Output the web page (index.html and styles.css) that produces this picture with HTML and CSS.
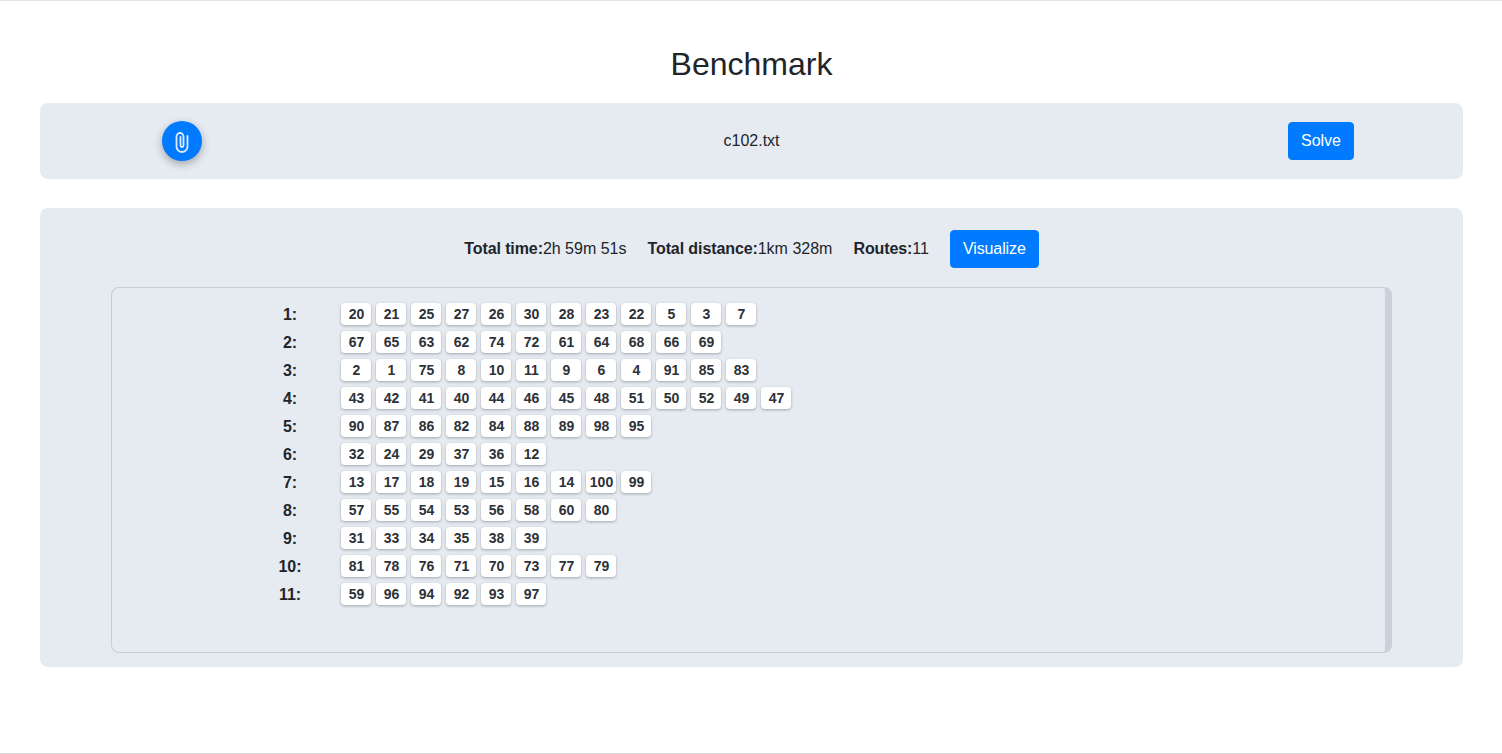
FILE: index.html
```html
<!DOCTYPE html>
<html lang="en">
<head>
    <meta charset="UTF-8">
    <meta name="viewport" content="width=device-width, initial-scale=1.0">
    <title>Benchmark</title>
    <link rel="stylesheet" href="styles.css">
</head>
<body>
    <div class="page">
        <h1 class="title">Benchmark</h1>

        <section class="panel upload">
            <div class="upload-cell">
                <button class="attach" type="button" aria-label="Attach file">
                    <svg viewBox="0 0 24 24" width="24" height="24" fill="none" stroke="#dcecff" stroke-width="1.8" stroke-linecap="round" stroke-linejoin="round">
                        <path d="M17.5 6v10.5a5.5 5.5 0 0 1-11 0V6.5a3.5 3.5 0 0 1 7 0v9a1.5 1.5 0 0 1-3 0V7"/>
                    </svg>
                </button>
            </div>
            <div class="file-name">c102.txt</div>
            <div class="upload-cell">
                <button class="btn" type="button">Solve</button>
            </div>
        </section>

        <section class="panel results">
            <div class="summary">
                <span><b>Total time:</b>2h 59m 51s</span>
                <span><b>Total distance:</b>1km 328m</span>
                <span><b>Routes:</b>11</span>
                <button class="btn" type="button">Visualize</button>
            </div>

            <div class="routes">
                <div class="route"><div class="route-name">1:</div><div class="stops"><span class="stop">20</span><span class="stop">21</span><span class="stop">25</span><span class="stop">27</span><span class="stop">26</span><span class="stop">30</span><span class="stop">28</span><span class="stop">23</span><span class="stop">22</span><span class="stop">5</span><span class="stop">3</span><span class="stop">7</span></div></div>
                <div class="route"><div class="route-name">2:</div><div class="stops"><span class="stop">67</span><span class="stop">65</span><span class="stop">63</span><span class="stop">62</span><span class="stop">74</span><span class="stop">72</span><span class="stop">61</span><span class="stop">64</span><span class="stop">68</span><span class="stop">66</span><span class="stop">69</span></div></div>
                <div class="route"><div class="route-name">3:</div><div class="stops"><span class="stop">2</span><span class="stop">1</span><span class="stop">75</span><span class="stop">8</span><span class="stop">10</span><span class="stop">11</span><span class="stop">9</span><span class="stop">6</span><span class="stop">4</span><span class="stop">91</span><span class="stop">85</span><span class="stop">83</span></div></div>
                <div class="route"><div class="route-name">4:</div><div class="stops"><span class="stop">43</span><span class="stop">42</span><span class="stop">41</span><span class="stop">40</span><span class="stop">44</span><span class="stop">46</span><span class="stop">45</span><span class="stop">48</span><span class="stop">51</span><span class="stop">50</span><span class="stop">52</span><span class="stop">49</span><span class="stop">47</span></div></div>
                <div class="route"><div class="route-name">5:</div><div class="stops"><span class="stop">90</span><span class="stop">87</span><span class="stop">86</span><span class="stop">82</span><span class="stop">84</span><span class="stop">88</span><span class="stop">89</span><span class="stop">98</span><span class="stop">95</span></div></div>
                <div class="route"><div class="route-name">6:</div><div class="stops"><span class="stop">32</span><span class="stop">24</span><span class="stop">29</span><span class="stop">37</span><span class="stop">36</span><span class="stop">12</span></div></div>
                <div class="route"><div class="route-name">7:</div><div class="stops"><span class="stop">13</span><span class="stop">17</span><span class="stop">18</span><span class="stop">19</span><span class="stop">15</span><span class="stop">16</span><span class="stop">14</span><span class="stop">100</span><span class="stop">99</span></div></div>
                <div class="route"><div class="route-name">8:</div><div class="stops"><span class="stop">57</span><span class="stop">55</span><span class="stop">54</span><span class="stop">53</span><span class="stop">56</span><span class="stop">58</span><span class="stop">60</span><span class="stop">80</span></div></div>
                <div class="route"><div class="route-name">9:</div><div class="stops"><span class="stop">31</span><span class="stop">33</span><span class="stop">34</span><span class="stop">35</span><span class="stop">38</span><span class="stop">39</span></div></div>
                <div class="route"><div class="route-name">10:</div><div class="stops"><span class="stop">81</span><span class="stop">78</span><span class="stop">76</span><span class="stop">71</span><span class="stop">70</span><span class="stop">73</span><span class="stop">77</span><span class="stop">79</span></div></div>
                <div class="route"><div class="route-name">11:</div><div class="stops"><span class="stop">59</span><span class="stop">96</span><span class="stop">94</span><span class="stop">92</span><span class="stop">93</span><span class="stop">97</span></div></div>
            </div>
        </section>
    </div>
</body>
</html>
```

FILE: styles.css
```css
* {
    box-sizing: border-box;
}

html, body {
    height: 100%;
}

body {
    margin: 0;
    font-family: "Liberation Sans", Arial, sans-serif;
    font-size: 16px;
    line-height: 1.5;
    color: #212529;
    background-color: #ffffff;
}

.page {
    height: 754px;
    padding: 0 39px 0 40px;
    border-top: 1px solid #e1e5ec;
    border-bottom: 1px solid #d9d9d9;
    overflow: hidden;
}

.title {
    margin: 0;
    padding-top: 40px;
    height: 102px;
    font-size: 32px;
    font-weight: 400;
    line-height: 46px;
    text-align: center;
}

.panel {
    background-color: #e6ebf2;
    border-radius: 8px;
}

.upload {
    display: grid;
    grid-template-columns: 284px 1fr 284px;
    align-items: center;
    height: 76px;
    margin-bottom: 29px;
}

.upload-cell {
    display: flex;
    justify-content: center;
}

.file-name {
    text-align: center;
}

.attach {
    display: flex;
    align-items: center;
    justify-content: center;
    width: 40px;
    height: 40px;
    padding: 2px 0 0;
    border: none;
    border-radius: 50%;
    background-color: #007bff;
    box-shadow: 0 3px 8px rgba(0, 0, 0, 0.3);
    cursor: pointer;
}

.btn {
    height: 38px;
    padding: 0 12px;
    border: 1px solid #007bff;
    border-radius: 4px;
    background-color: #007bff;
    color: #ffffff;
    font-family: inherit;
    font-size: 16px;
    cursor: pointer;
}

.results {
    height: 459px;
    padding: 22px 71px 14px 71px;
}

.summary {
    display: flex;
    justify-content: center;
    align-items: center;
    gap: 21px;
    margin-bottom: 19px;
}

.summary b {
    letter-spacing: -0.1px;
}

.summary .btn {
    letter-spacing: -0.1px;
}

.routes {
    height: 366px;
    padding: 12px 0 0 149px;
    border: 1px solid #c8ccd4;
    border-right: 7px solid #ccd1d9;
    border-radius: 8px;
    overflow: hidden;
}

.route {
    display: flex;
    align-items: center;
    height: 28px;
}

.route-name {
    width: 58px;
    margin-right: 22px;
    padding-top: 2px;
    font-weight: 700;
    text-align: center;
}

.stops {
    display: flex;
    gap: 5px;
}

.stop {
    width: 30px;
    height: 22px;
    padding-left: 1px;
    border-radius: 4px;
    background-color: #ffffff;
    box-shadow: 0 1px 3px rgba(0, 0, 0, 0.3);
    color: #2d3138;
    font-size: 14px;
    font-weight: 700;
    line-height: 22px;
    text-align: center;
}
```
